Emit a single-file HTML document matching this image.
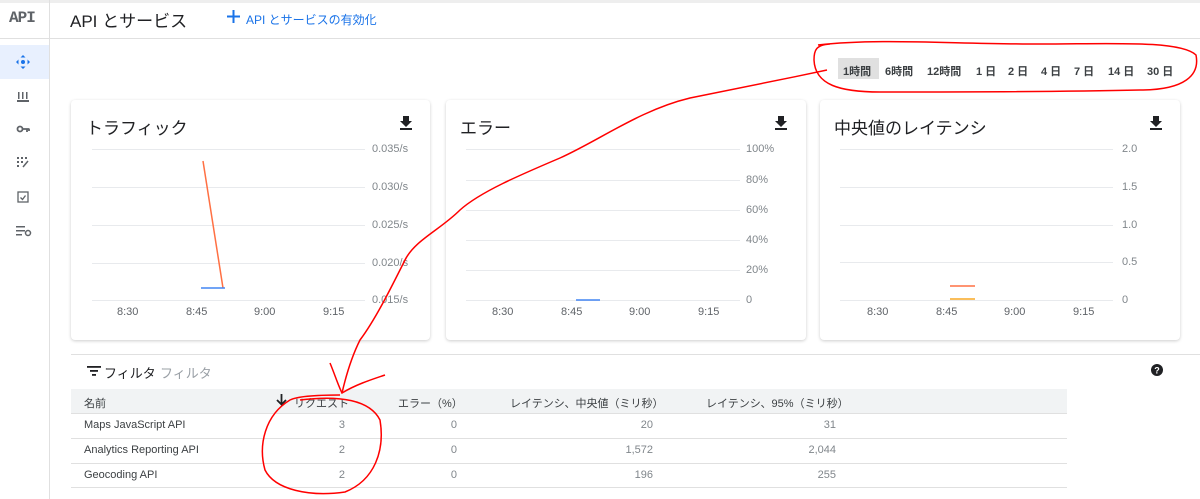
<!DOCTYPE html>
<html><head><meta charset="utf-8"><style>
*{margin:0;padding:0;box-sizing:border-box}
body{width:1200px;height:499px;overflow:hidden;background:#fff;font-family:"Liberation Sans","Noto Sans CJK JP",sans-serif;color:#202124;position:relative}
.a{position:absolute;white-space:nowrap}
.card{position:absolute;top:100px;height:240px;background:#fff;border-radius:4px;box-shadow:0 1px 3px rgba(0,0,0,.2)}
.ttl{font-size:17px;color:#202124}
.yl{font-size:11px;color:#80868b}
.xl{font-size:11px;color:#5f6368}
.g{position:absolute;height:1px;background:#e8eaed}
.tr{font-size:11px;font-weight:bold;color:#3c4043}
.cell{font-size:11px;color:#3c4043}
.num{font-size:11px;color:#80868b;text-align:right}
</style></head><body>
<div class="a" style="left:0;top:0;width:1200px;height:3px;background:#eee"></div>
<div class="a" style="left:49px;top:0;width:1px;height:499px;background:#e0e0e0"></div>
<div class="a" style="left:0;top:38px;width:1200px;height:1px;background:#e0e0e0"></div>
<div class="a" style="left:9px;top:9px;font-family:'Liberation Mono',monospace;font-size:16px;font-weight:bold;color:#5f6368;letter-spacing:-1px">API</div>
<div class="a" style="left:0;top:45px;width:49px;height:34px;background:#e8f0fe"></div>
<svg class="a" style="left:15px;top:54px" width="16" height="16" viewBox="0 0 16 16" fill="#1a73e8"><path d="M8 1l2.5 2.5h-5zM8 15l-2.5-2.5h5zM1 8l2.5-2.5v5zM15 8l-2.5 2.5v-5z"/><circle cx="8" cy="8" r="2"/></svg>
<svg class="a" style="left:16px;top:90px" width="14" height="14" fill="#5f6368"><rect x="1" y="10" width="12" height="2"/><rect x="2" y="2" width="1.5" height="7"/><rect x="6" y="2" width="1.5" height="7"/><rect x="10" y="2" width="1.5" height="7"/></svg>
<svg class="a" style="left:16px;top:124px" width="15" height="10" fill="none" stroke="#5f6368" stroke-width="1.8"><circle cx="4" cy="5" r="2.5"/><path d="M6.5 5h7M11 5v3M13 5v2"/></svg>
<svg class="a" style="left:17px;top:156px" width="13" height="12" fill="#5f6368"><rect x="0" y="1" width="2" height="2"/><rect x="4" y="1" width="2" height="2"/><rect x="8" y="1" width="2" height="2"/><rect x="0" y="5" width="2" height="2"/><rect x="4" y="5" width="2" height="2"/><rect x="0" y="9" width="2" height="2"/><path d="M6 11l5-6" stroke="#5f6368" stroke-width="1.5"/></svg>
<svg class="a" style="left:17px;top:191px" width="12" height="12" fill="none" stroke="#5f6368" stroke-width="1.3"><rect x="1" y="1" width="10" height="10"/><path d="M3.5 6.5l2 2 3-4"/></svg>
<svg class="a" style="left:16px;top:225px" width="16" height="12" fill="#5f6368"><rect x="0" y="1" width="9" height="1.5"/><rect x="0" y="5" width="9" height="1.5"/><rect x="0" y="9" width="6" height="1.5"/><circle cx="12" cy="8" r="2.5" fill="none" stroke="#5f6368" stroke-width="1.5"/></svg>
<div class="a" style="left:70px;top:7px;font-size:17px;color:#202124">API とサービス</div>
<svg class="a" style="left:227px;top:10px" width="13" height="13"><path d="M6.5 0v13M0 6.5h13" stroke="#1a73e8" stroke-width="2"/></svg>
<div class="a" style="left:246px;top:11px;font-size:12px;color:#1a73e8">API とサービスの有効化</div>
<div class="a" style="left:838px;top:58px;width:41px;height:21px;background:#e0e0e0"></div>
<div class="a tr" style="left:843px;top:63px">1時間</div>
<div class="a tr" style="left:885px;top:63px">6時間</div>
<div class="a tr" style="left:927px;top:63px">12時間</div>
<div class="a tr" style="left:976px;top:63px">1 日</div>
<div class="a tr" style="left:1008px;top:63px">2 日</div>
<div class="a tr" style="left:1041px;top:63px">4 日</div>
<div class="a tr" style="left:1074px;top:63px">7 日</div>
<div class="a tr" style="left:1108px;top:63px">14 日</div>
<div class="a tr" style="left:1147px;top:63px">30 日</div>

<div class="card" style="left:71px;width:359px"></div>
<div class="card" style="left:446px;width:360px"></div>
<div class="card" style="left:820px;width:360px"></div>
<div class="a ttl" style="left:86px;top:114px">トラフィック</div>
<div class="a ttl" style="left:460px;top:114px">エラー</div>
<div class="a ttl" style="left:834px;top:114px">中央値のレイテンシ</div>
<svg class="a" style="left:400px;top:116px" width="12" height="14" fill="#202124"><path d="M3 0h6v5h3l-6 6-6-6h3z"/><rect y="12" width="12" height="2"/></svg>
<svg class="a" style="left:775px;top:116px" width="12" height="14" fill="#202124"><path d="M3 0h6v5h3l-6 6-6-6h3z"/><rect y="12" width="12" height="2"/></svg>
<svg class="a" style="left:1150px;top:116px" width="12" height="14" fill="#202124"><path d="M3 0h6v5h3l-6 6-6-6h3z"/><rect y="12" width="12" height="2"/></svg>

<div class="g" style="left:92px;top:149px;width:273px"></div><div class="g" style="left:92px;top:187px;width:273px"></div><div class="g" style="left:92px;top:225px;width:273px"></div><div class="g" style="left:92px;top:263px;width:273px"></div><div class="g" style="left:92px;top:300px;width:273px"></div>
<div class="a yl" style="left:372px;top:143px">0.035/s</div><div class="a yl" style="left:372px;top:181px">0.030/s</div><div class="a yl" style="left:372px;top:219px">0.025/s</div><div class="a yl" style="left:372px;top:257px">0.020/s</div><div class="a yl" style="left:372px;top:294px">0.015/s</div>
<div class="a xl" style="left:117px;top:306px">8:30</div><div class="a xl" style="left:186px;top:306px">8:45</div><div class="a xl" style="left:254px;top:306px">9:00</div><div class="a xl" style="left:323px;top:306px">9:15</div>

<div class="g" style="left:466px;top:149px;width:274px"></div><div class="g" style="left:466px;top:180px;width:274px"></div><div class="g" style="left:466px;top:210px;width:274px"></div><div class="g" style="left:466px;top:240px;width:274px"></div><div class="g" style="left:466px;top:270px;width:274px"></div><div class="g" style="left:466px;top:300px;width:274px"></div>
<div class="a yl" style="left:746px;top:143px">100%</div><div class="a yl" style="left:746px;top:174px">80%</div><div class="a yl" style="left:746px;top:204px">60%</div><div class="a yl" style="left:746px;top:234px">40%</div><div class="a yl" style="left:746px;top:264px">20%</div><div class="a yl" style="left:746px;top:294px">0</div>
<div class="a xl" style="left:492px;top:306px">8:30</div><div class="a xl" style="left:561px;top:306px">8:45</div><div class="a xl" style="left:629px;top:306px">9:00</div><div class="a xl" style="left:698px;top:306px">9:15</div>

<div class="g" style="left:840px;top:149px;width:273px"></div><div class="g" style="left:840px;top:187px;width:273px"></div><div class="g" style="left:840px;top:225px;width:273px"></div><div class="g" style="left:840px;top:262px;width:273px"></div><div class="g" style="left:840px;top:300px;width:273px"></div>
<div class="a yl" style="left:1122px;top:143px">2.0</div><div class="a yl" style="left:1122px;top:181px">1.5</div><div class="a yl" style="left:1122px;top:219px">1.0</div><div class="a yl" style="left:1122px;top:256px">0.5</div><div class="a yl" style="left:1122px;top:294px">0</div>
<div class="a xl" style="left:867px;top:306px">8:30</div><div class="a xl" style="left:936px;top:306px">8:45</div><div class="a xl" style="left:1004px;top:306px">9:00</div><div class="a xl" style="left:1073px;top:306px">9:15</div>

<svg class="a" style="left:0;top:0" width="1200" height="499">
<path d="M203 161L223 288" stroke="#ff7043" stroke-width="1.5" fill="none"/>
<path d="M201 288H225" stroke="#4285f4" stroke-width="1.5"/>
<path d="M576 300H600" stroke="#4285f4" stroke-width="1.5"/>
<path d="M950 286H975" stroke="#ff7043" stroke-width="1.5"/>
<path d="M950 299H975" stroke="#f9a825" stroke-width="1.5"/>
</svg>

<div class="a" style="left:71px;top:354px;width:1129px;height:1px;background:#e0e0e0"></div>
<svg class="a" style="left:87px;top:366px" width="14" height="10" fill="#202124"><rect width="14" height="1.8"/><rect x="3" y="4" width="8" height="1.8"/><rect x="5" y="8" width="4" height="1.8"/></svg>
<div class="a" style="left:104px;top:363px;font-size:13px;color:#202124">フィルタ</div>
<div class="a" style="left:160px;top:363px;font-size:13px;color:#9aa0a6">フィルタ</div>
<svg class="a" style="left:1151px;top:364px" width="12" height="12"><circle cx="6" cy="6" r="6" fill="#202124"/><text x="6" y="9.5" font-size="9" font-weight="bold" fill="#fff" text-anchor="middle" font-family="Liberation Sans">?</text></svg>
<div class="a" style="left:71px;top:389px;width:996px;height:25px;background:#f1f3f4;border-bottom:1px solid #e0e0e0"></div>
<div class="a cell" style="left:84px;top:395px">名前</div>
<svg class="a" style="left:276px;top:394px" width="11" height="12"><path d="M5.5 0v10M1 6l4.5 4.5L10 6" stroke="#202124" stroke-width="1.8" fill="none"/></svg>
<div class="a cell" style="left:294px;top:395px">リクエスト</div>
<div class="a cell" style="left:398px;top:395px">エラー（%）</div>
<div class="a cell" style="left:510px;top:395px">レイテンシ、中央値（ミリ秒）</div>
<div class="a cell" style="left:706px;top:395px">レイテンシ、95%（ミリ秒）</div>
<div class="a" style="left:71px;top:438px;width:996px;height:1px;background:#e0e0e0"></div>
<div class="a" style="left:71px;top:463px;width:996px;height:1px;background:#e0e0e0"></div>
<div class="a" style="left:71px;top:487px;width:996px;height:1px;background:#e0e0e0"></div>
<div class="a cell" style="left:84px;top:419px">Maps JavaScript API</div>
<div class="a cell" style="left:84px;top:444px">Analytics Reporting API</div>
<div class="a cell" style="left:84px;top:469px">Geocoding API</div>
<div class="a num" style="left:300px;width:45px;top:419px">3</div><div class="a num" style="left:300px;width:45px;top:444px">2</div><div class="a num" style="left:300px;width:45px;top:469px">2</div>
<div class="a num" style="left:400px;width:57px;top:419px">0</div><div class="a num" style="left:400px;width:57px;top:444px">0</div><div class="a num" style="left:400px;width:57px;top:469px">0</div>
<div class="a num" style="left:580px;width:73px;top:419px">20</div><div class="a num" style="left:580px;width:73px;top:444px">1,572</div><div class="a num" style="left:580px;width:73px;top:469px">196</div>
<div class="a num" style="left:760px;width:76px;top:419px">31</div><div class="a num" style="left:760px;width:76px;top:444px">2,044</div><div class="a num" style="left:760px;width:76px;top:469px">255</div>

<svg class="a" style="left:0;top:0" width="1200" height="499" fill="none" stroke="#f00" stroke-width="1.5">
<path d="M818 45C880 38 950 44 1040 44C1110 44 1180 40 1196 55C1200 75 1185 90 1140 90C1050 92 950 92 880 92C840 92 815 85 814 60C814 50 816 45 830 44"/>
<path d="M827 70C780 80 730 90 690 98C640 110 600 140 560 158C520 175 480 192 460 210C440 230 415 240 405 260C390 290 375 320 360 340C350 360 345 380 342 393"/>
<path d="M330 363C335 375 338 385 342 393C355 385 370 380 385 375"/>
<path d="M300 400C340 395 370 400 380 420C385 450 375 480 345 492C310 497 275 490 265 470C258 445 265 415 290 400C300 395 330 395 340 395"/>
</svg>
</body></html>
